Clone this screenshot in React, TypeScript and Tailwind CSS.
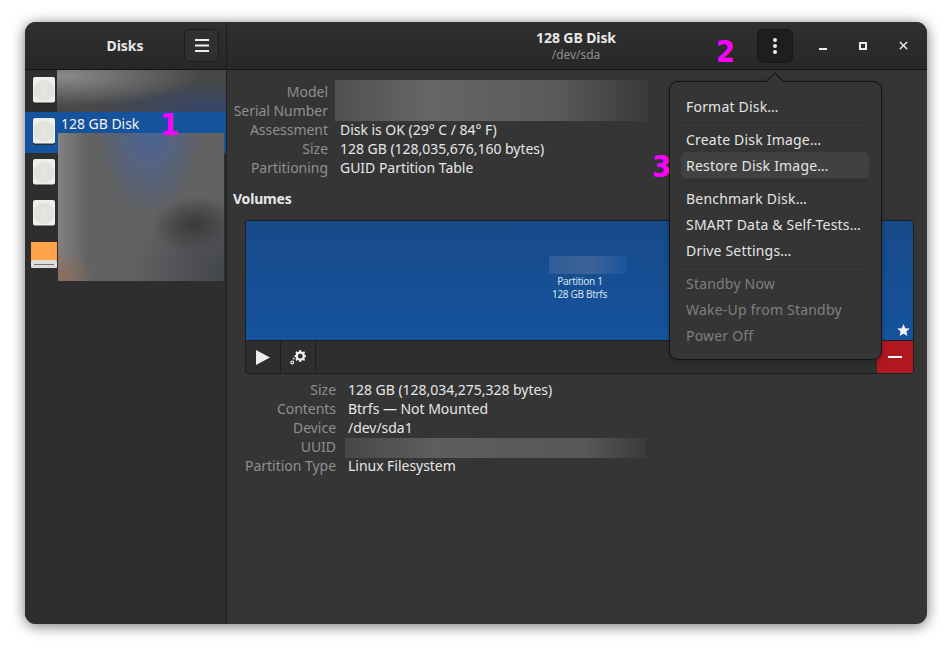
import { X } from 'lucide-react';

const diskRows = [{ selected: false }, { selected: true }, { selected: false }, { selected: false }];

const DiskIcon = () => (
  <svg width="22" height="27" viewBox="0 0 22 27" className="mb-[3px] shrink-0">
    <rect x="0" y="1" width="22" height="26" rx="2" fill="#2a2a2a" />
    <rect x="0" y="0" width="22" height="25.5" rx="2" fill="#efeeeb" />
    <circle cx="11" cy="13.5" r="10.5" fill="#e3e2df" />
    <circle cx="11" cy="14" r="0.9" fill="#f2f1ee" />
  </svg>
);

const DriveIcon = () => (
  <svg width="26" height="26" viewBox="0 0 26 26" className="mb-[2px] shrink-0">
    <rect x="0" y="0" width="26" height="18" fill="#ffa348" />
    <rect x="0" y="18" width="26" height="8" rx="1" fill="#deddda" />
    <rect x="3" y="22" width="20" height="1" fill="#77767b" />
  </svg>
);

const Value = ({ label, value, width }: { label: string; value?: string; width: string }) => (
  <div className="flex h-[19px] items-center">
    <span className={`${width} shrink-0 text-right text-[#8f8f8f]`}>{label}</span>
    <span className="ml-3 whitespace-nowrap text-[#e6e6e6]">{value}</span>
  </div>
);

const MenuItem = ({ text, active, off }: { text: string; active?: boolean; off?: boolean }) => (
  <div
    className={`flex h-[26px] items-center rounded-[5px] px-[5px] whitespace-nowrap ${active ? 'bg-[#414141]' : ''} ${off ? 'text-[#7f7f7f]' : 'text-[#e4e4e4]'}`}
  >
    {text}
  </div>
);

const Sep = () => <div className="mx-[1px] my-[3px] h-px bg-[#2c2c2c]" />;

const Note = ({ n, className }: { n: string; className: string }) => (
  <span className={`absolute origin-left scale-x-[0.88] font-['DejaVu_Sans',sans-serif] text-[31px] leading-none font-bold tracking-normal text-[#ff00ff] ${className}`}>
    {n}
  </span>
);

export default function App() {
  return (
    <div className="h-[652px] w-[952px] overflow-hidden bg-white pt-[22px] pl-[25px] font-['Noto_Sans',sans-serif] text-[14px] tracking-[-0.03px]">
      <div className="relative flex h-[602px] w-[902px] flex-col overflow-hidden rounded-[11px] bg-[#353535] shadow-[0_2px_14px_rgba(0,0,0,0.55)]">
        {/* header */}
        <div className="flex h-[48px] shrink-0 border-b border-[#141414] bg-gradient-to-b from-[#303030] to-[#272727]">
          <div className="flex w-[202px] shrink-0 items-center border-r border-[#1c1c1c] pr-[7px]">
            <div className="flex-1 pl-[41px] text-center font-bold text-[#e8e8e8]">Disks</div>
            <button className="flex h-[33px] w-[35px] items-center justify-center rounded-[6px] border border-[#1c1c1c] bg-[#303030]">
              <svg width="14" height="13" viewBox="0 0 14 13" fill="#eeeeee">
                <rect y="0" width="14" height="2" />
                <rect y="5.5" width="14" height="2" />
                <rect y="11" width="14" height="2" />
              </svg>
            </button>
          </div>
          <div className="flex flex-1 items-center">
            <div className="flex-1 pl-[168px] text-center">
              <div className="text-[14px] leading-[19px] font-bold tracking-[-0.1px] text-[#e8e8e8]">128 GB Disk</div>
              <div className="text-[12px] leading-[16px] text-[#8f8f8f]">/dev/sda</div>
            </div>
            <button className="mr-[10px] flex h-[34px] w-[36px] items-center justify-center rounded-[6px] border border-[#181818] bg-[#1e1e1e]">
              <svg width="4" height="16" viewBox="0 0 4 16" fill="#eeeeee">
                <circle cx="2" cy="2" r="2" />
                <circle cx="2" cy="8" r="2" />
                <circle cx="2" cy="14" r="2" />
              </svg>
            </button>
            <div className="flex items-center text-[#eeeeee]">
              <div className="flex w-[40px] justify-center pt-[6px]">
                <div className="h-[2px] w-[8px] bg-[#eeeeee]" />
              </div>
              <div className="flex w-[40px] justify-center">
                <div className="h-[8px] w-[8px] border-2 border-[#eeeeee]" />
              </div>
              <div className="flex w-[40px] justify-center">
                <X size={13} strokeWidth={2.6} />
              </div>
            </div>
            <div className="w-[4px]" />
          </div>
        </div>

        <div className="flex min-h-0 flex-1">
          {/* sidebar */}
          <div className="relative w-[202px] shrink-0 border-r border-[#1f1f1f] bg-[#2e2e2e] pt-px">
            {diskRows.map((row, i) => (
              <div
                key={i}
                className={`flex h-[41px] items-center pl-[8px] text-[#f2f2f2] ${row.selected ? 'bg-[#15539e]' : ''}`}
              >
                <DiskIcon />
                {row.selected && <span className="mb-[18px] ml-[6px]">128 GB Disk</span>}
              </div>
            ))}
            <div className="flex h-[41px] items-center pl-[6px]">
              <DriveIcon />
            </div>
            {/* blurred out disk names */}
            <div className="absolute top-0 left-[32px] h-[42px] w-[169px] overflow-hidden bg-[#484848]">
              <div className="h-full w-full bg-[radial-gradient(ellipse_at_0%_15%,#8c8c8c,transparent_60%),radial-gradient(ellipse_at_95%_100%,#34466c,transparent_55%)]" />
            </div>
            <div className="absolute top-[63px] left-[33px] h-[148px] w-[166px] overflow-hidden bg-[#626262]">
              <div className="h-full w-full bg-[radial-gradient(ellipse_at_82%_62%,#3a3a3a,transparent_22%),radial-gradient(ellipse_at_55%_-8%,#48659b,transparent_42%),radial-gradient(ellipse_at_0%_100%,#8a6a58,transparent_16%),radial-gradient(ellipse_at_100%_95%,#42454c,transparent_40%),linear-gradient(90deg,#828282,transparent_18%)]" />
            </div>
            <Note n="1" className="top-[39px] left-[135px]" />
          </div>

          {/* main pane */}
          <div className="relative min-w-0 flex-1 pt-[12px] pl-[6px]">
            <Value label="Model" width="w-[95px]" />
            <Value label="Serial Number" width="w-[95px]" />
            <Value label="Assessment" value="Disk is OK (29° C / 84° F)" width="w-[95px]" />
            <Value label="Size" value="128 GB (128,035,676,160 bytes)" width="w-[95px]" />
            <Value label="Partitioning" value="GUID Partition Table" width="w-[95px]" />
            <div className="mt-[12px] h-[19px] leading-[19px] font-bold tracking-[-0.2px] text-[#e8e8e8]">Volumes</div>

            <div className="mt-[12px] ml-[12px] w-[669px] overflow-hidden rounded-[3px] border border-[#1f1f1f] bg-[#2e2e2e]">
              <div className="relative flex h-[119px] flex-col items-center bg-gradient-to-b from-[#174a89] to-[#15539e] pt-[54px] text-[10px] leading-[13px] tracking-[-0.3px] text-[#d8e2f0]">
                <div className="pl-[1px]">Partition 1</div>
                <div>128 GB Btrfs</div>
                <svg width="13" height="12" viewBox="0 0 24 23" fill="#f2f2f2" className="absolute right-[3px] bottom-[4px]">
                  <path d="M12 0 L15.5 8 L24 8.8 L17.6 14.5 L19.5 23 L12 18.5 L4.5 23 L6.4 14.5 L0 8.8 L8.5 8 Z" />
                </svg>
              </div>
              <div className="flex h-[33px] border-t border-[#1f1f1f]">
                <div className="flex w-[35px] items-center justify-center border-r border-[#1f1f1f]">
                  <svg width="14" height="15" viewBox="0 0 14 15">
                    <path d="M0 0 L14 7.5 L0 15 Z" fill="#eeeeee" />
                  </svg>
                </div>
                <div className="flex w-[35px] items-center justify-center border-r border-[#1f1f1f]">
                  <svg width="16" height="15" viewBox="0 0 16 15" fill="#eeeeee">
                    <path d="M9.5 0 L11 0 L11.4 1.5 L12.8 2.1 L14.1 1.3 L15.1 2.4 L14.3 3.6 L14.9 5 L16 5.4 L16 6.9 L14.9 7.3 L14.3 8.6 L15.1 9.8 L14.1 10.9 L12.8 10.1 L11.4 10.7 L11 12 L9.5 12 L9.1 10.7 L7.7 10.1 L6.4 10.9 L5.4 9.8 L6.2 8.6 L5.6 7.3 L4.5 6.9 L4.5 5.4 L5.6 5 L6.2 3.6 L5.4 2.4 L6.4 1.3 L7.7 2.1 L9.1 1.5 Z M10.25 3.8 A2.4 2.4 0 1 0 10.25 8.6 A2.4 2.4 0 1 0 10.25 3.8 Z" fillRule="evenodd" />
                    <path d="M2.2 10.6 A2 2 0 1 0 2.2 14.6 A2 2 0 1 0 2.2 10.6 Z M2.2 11.8 A0.8 0.8 0 1 1 2.2 13.4 A0.8 0.8 0 1 1 2.2 11.8 Z" fillRule="evenodd" />
                    <circle cx="3.6" cy="8.6" r="0.9" />
                  </svg>
                </div>
                <div className="flex-1" />
                <div className="flex w-[36px] items-center justify-center bg-[#b0171f]">
                  <div className="h-[2px] w-[14px] bg-white" />
                </div>
              </div>
            </div>

            <div className="mt-[6px] pl-[2px]">
              <Value label="Size" value="128 GB (128,034,275,328 bytes)" width="w-[101px]" />
              <Value label="Contents" value="Btrfs — Not Mounted" width="w-[101px]" />
              <Value label="Device" value="/dev/sda1" width="w-[101px]" />
              <Value label="UUID" width="w-[101px]" />
              <Value label="Partition Type" value="Linux Filesystem" width="w-[101px]" />
            </div>

            {/* blurred serial, uuid and partition name */}
            <div className="absolute top-[10px] left-[108px] h-[41px] w-[313px] bg-[linear-gradient(90deg,#505050,#666666_30%,#5a5a5a_70%,#3a3a3a)]" />
            <div className="absolute top-[368px] left-[118px] h-[20px] w-[301px] bg-[linear-gradient(90deg,#474747,#5e5e5e_30%,#575757_80%,#3a3a3a)]" />
            <div className="absolute top-[186px] left-[322px] h-[18px] w-[77px] bg-[linear-gradient(90deg,#2f5c98,#3f6399_50%,#1a569f)]" />
          </div>
        </div>

        {/* popover */}
        <div className="absolute top-[59px] left-[644px] w-[213px] rounded-[9px] border border-[#141414] bg-[#353535] pt-[11px] pr-[12px] pb-[11px] pl-[11px] tracking-[0.2px] shadow-[0_1px_5px_rgba(0,0,0,0.3)]">
          <div className="absolute -top-[7px] left-[99px] h-[12px] w-[12px] rotate-45 border-t border-l border-[#141414] bg-[#353535]" />
          <MenuItem text="Format Disk…" />
          <Sep />
          <MenuItem text="Create Disk Image…" />
          <MenuItem text="Restore Disk Image…" active />
          <Sep />
          <MenuItem text="Benchmark Disk…" />
          <MenuItem text="SMART Data & Self-Tests…" />
          <MenuItem text="Drive Settings…" />
          <Sep />
          <MenuItem text="Standby Now" off />
          <MenuItem text="Wake-Up from Standby" off />
          <MenuItem text="Power Off" off />
        </div>

        <Note n="2" className="top-[14px] left-[691px]" />
        <Note n="3" className="top-[129px] left-[627px]" />
      </div>
    </div>
  );
}
